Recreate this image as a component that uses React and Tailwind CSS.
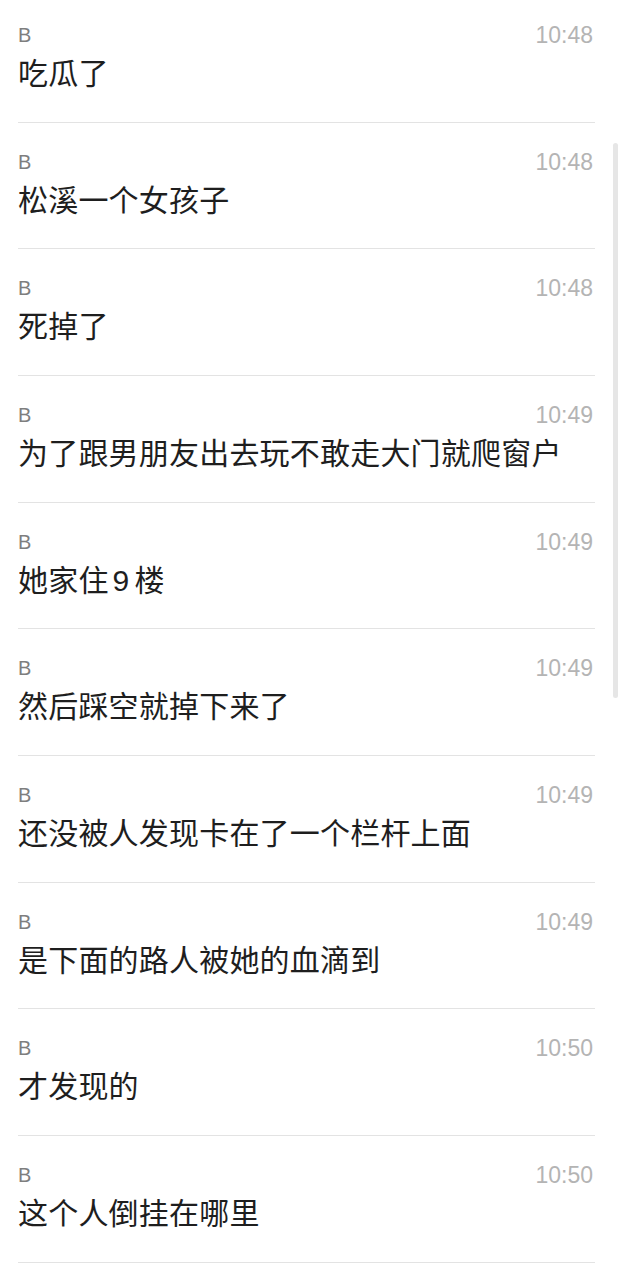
import React from "react";

const messages = [
  { name: "B", time: "10:48", text: "吃瓜了" },
  { name: "B", time: "10:48", text: "松溪一个女孩子" },
  { name: "B", time: "10:48", text: "死掉了" },
  { name: "B", time: "10:49", text: "为了跟男朋友出去玩不敢走大门就爬窗户" },
  { name: "B", time: "10:49", text: "她家住9楼" },
  { name: "B", time: "10:49", text: "然后踩空就掉下来了" },
  { name: "B", time: "10:49", text: "还没被人发现卡在了一个栏杆上面" },
  { name: "B", time: "10:49", text: "是下面的路人被她的血滴到" },
  { name: "B", time: "10:50", text: "才发现的" },
  { name: "B", time: "10:50", text: "这个人倒挂在哪里" },
];

// digits get a little air around them like the phone font does
function renderText(text) {
  return text.split(/(\d+)/).map((part, i) =>
    /^\d+$/.test(part) ? (
      <span key={i} className="pl-[4px] pr-[5px]">
        {part}
      </span>
    ) : (
      part
    )
  );
}

function MessageRow({ msg }) {
  return (
    <div className="h-[126.67px] ml-[18px] mr-[29px] border-b border-[#e3e3e3] pt-[28px] box-border">
      <div className="flex justify-between items-start">
        <span className="text-[20px] leading-[22px] text-[#7e7e7e]">{msg.name}</span>
        <span className="text-[23px] leading-[22px] text-[#b4b4b4] pr-[2px]">{msg.time}</span>
      </div>
      <p className="mt-[13px] text-[30px] leading-[30px] tracking-[0.2px] text-[#1e1e1e] whitespace-nowrap">
        {renderText(msg.text)}
      </p>
    </div>
  );
}

export default function App() {
  return (
    <div
      className="relative w-[624px] h-[1280px] bg-white overflow-hidden"
      style={{ fontFamily: '"Liberation Sans", "Noto Sans CJK SC", sans-serif' }}
    >
      <div className="-mt-[4px]">
        {messages.map((msg, i) => (
          <MessageRow key={i} msg={msg} />
        ))}
      </div>
      {/* scroll indicator */}
      <div className="absolute left-[613px] top-[143px] w-[5px] h-[555px] rounded-full bg-[#e6e6e6]" />
    </div>
  );
}
